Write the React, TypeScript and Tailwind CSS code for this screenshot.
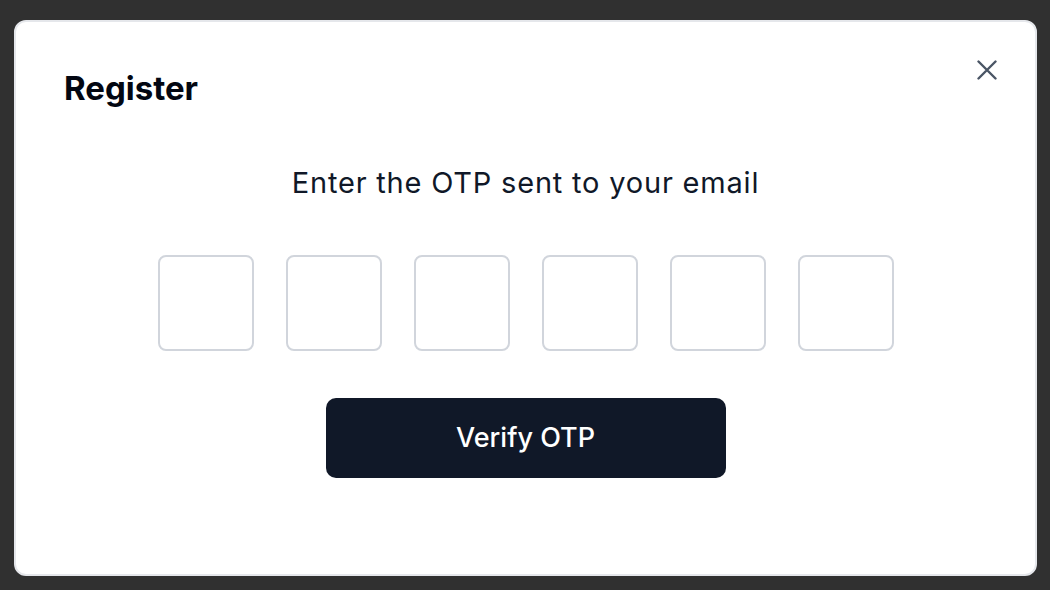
export default function App() {
  const boxes = [0, 1, 2, 3, 4, 5]

  return (
    <div className="h-[590px] w-[1050px] bg-[#303030] pl-[14px] pt-[20px] font-['Inter',sans-serif]">
      <div className="relative flex h-[556px] w-[1023px] flex-col rounded-[12px] border-2 border-gray-200 bg-white px-[48px] pt-[46px] pb-[96px]">
        <button className="absolute top-[36px] right-[36px] flex h-[24px] w-[24px] items-center justify-center text-gray-600">
          <svg width="20" height="20" viewBox="0 0 20 20" fill="none" stroke="currentColor" strokeWidth="2.4" strokeLinecap="round">
            <path d="M1.5 1.5l17 17M18.5 1.5l-17 17" />
          </svg>
        </button>

        <h2 className="text-[33px] leading-[40px] font-bold text-gray-950">Register</h2>

        <p className="mt-[57px] text-center text-[29px] leading-[36px] tracking-[0.8px] text-gray-900">
          Enter the OTP sent to your email
        </p>

        <div className="mt-[54px] flex justify-center gap-[32px]">
          {boxes.map((b) => (
            <input
              key={b}
              maxLength={1}
              className="h-[96px] w-[96px] rounded-[8px] border-2 border-gray-300 text-center text-[32px] outline-none"
            />
          ))}
        </div>

        <div className="mt-[47px] flex justify-center">
          <button className="h-[80px] w-[400px] rounded-[10px] bg-gray-900 text-[27px] font-medium text-white">
            Verify OTP
          </button>
        </div>
      </div>
    </div>
  )
}
